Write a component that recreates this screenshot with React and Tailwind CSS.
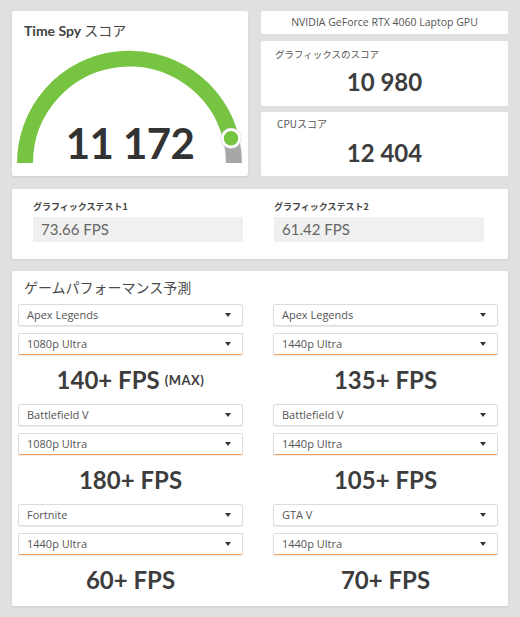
const latin = "font-['Lato','Noto_Sans_CJK_JP',sans-serif]";
const ui = "font-['Open_Sans','Noto_Sans_CJK_JP',sans-serif]";
const jp = "font-['Noto_Sans_CJK_JP',sans-serif]";

const games = [
  [
    { game: "Apex Legends", preset: "1080p Ultra", fps: "140+ FPS", max: true },
    { game: "Apex Legends", preset: "1440p Ultra", fps: "135+ FPS" },
  ],
  [
    { game: "Battlefield V", preset: "1080p Ultra", fps: "180+ FPS" },
    { game: "Battlefield V", preset: "1440p Ultra", fps: "105+ FPS" },
  ],
  [
    { game: "Fortnite", preset: "1440p Ultra", fps: "60+ FPS" },
    { game: "GTA V", preset: "1440p Ultra", fps: "70+ FPS" },
  ],
];

function Gauge() {
  // center (117.5, 152), radius 104.5, green stops ~13.7° above horizontal
  return (
    <svg className="absolute left-0 top-0" width="237" height="165" viewBox="0 0 237 165">
      <path d="M13 152 A104.5 104.5 0 0 1 219 127.3" fill="none" stroke="#76c442" strokeWidth="16" />
      <path d="M219 127.3 A104.5 104.5 0 0 1 222 152" fill="none" stroke="#a6a6a6" strokeWidth="16" />
      <circle cx="219" cy="127.3" r="10.5" fill="#dcdcdc" />
      <circle cx="219" cy="127.3" r="8.5" fill="#76c442" stroke="#fff" strokeWidth="2.5" />
    </svg>
  );
}

function Select({ label, active }) {
  return (
    <div
      className={`flex h-[22px] items-center justify-between rounded-[2px] border border-[#dcdcdc] bg-white pl-[8px] pr-[11px] shadow-[0_1px_1px_rgba(0,0,0,0.08)] ${
        active ? "border-b-[#f5a05a]" : ""
      }`}
    >
      <span className={`${ui} text-[11px] text-[#555]`}>{label}</span>
      <span className="h-0 w-0 border-x-[3.5px] border-t-[4px] border-x-transparent border-t-[#333]" />
    </div>
  );
}

function GameCol({ game, preset, fps, max }) {
  return (
    <div className="w-[225px]">
      <div className="flex flex-col gap-[7px]">
        <Select label={game} />
        <Select label={preset} active />
      </div>
      <div className="flex h-[49px] items-center justify-center">
        <span className={`${latin} text-[24px] font-bold text-[#3d3d3d]`}>{fps}</span>
        {max && (
          <span className={`${latin} ml-[5px] mt-[3px] text-[13px] font-bold tracking-[0.5px] text-[#3d3d3d]`}>
            (MAX)
          </span>
        )}
      </div>
    </div>
  );
}

export default function App() {
  return (
    <div className="h-[617px] w-[520px] overflow-hidden bg-[#e0e0e0] px-[12px] pt-[11px]">
      <div className="flex gap-[13px]">
        <div className="relative h-[165px] w-[237px] rounded-[2px] bg-white shadow-[0_1px_2px_rgba(0,0,0,0.08)]">
          <Gauge />
          <div className={`${latin} relative pl-[12px] pt-[9px] text-[14px] font-bold text-[#444]`}>
            Time Spy <span className={`${jp} font-normal`}>スコア</span>
          </div>
          <div
            className={`${latin} absolute left-0 right-0 top-[107px] text-center text-[42px] font-bold leading-[50px] tracking-[-0.6px] text-[#333]`}
          >
            11 172
          </div>
        </div>

        <div className="flex w-[248px] flex-col">
          <div
            className={`${ui} flex h-[23px] items-center justify-center rounded-[2px] bg-white text-[10.5px] text-[#555]`}
          >
            NVIDIA GeForce RTX 4060 Laptop GPU
          </div>
          <div className="mt-[7px] h-[65px] rounded-[2px] bg-white pl-[14px] pt-[5px]">
            <div className={`${jp} text-[9.5px] leading-[16px] text-[#555]`}>グラフィックスのスコア</div>
            <div className={`${latin} -ml-[14px] mt-[6px] text-center text-[24px] font-bold leading-[28px] text-[#3d3d3d]`}>
              10 980
            </div>
          </div>
          <div className="mt-[6px] h-[64px] rounded-[2px] bg-white pl-[16px] pt-[4px]">
            <div className={`${jp} text-[10px] leading-[16px] text-[#555]`}>CPUスコア</div>
            <div className={`${latin} -ml-[16px] mt-[7px] text-center text-[24px] font-bold leading-[28px] text-[#3d3d3d]`}>
              12 404
            </div>
          </div>
        </div>
      </div>

      <div className="mt-[13px] flex h-[70px] gap-[31px] rounded-[2px] bg-white pl-[21px] pt-[11px] shadow-[0_1px_2px_rgba(0,0,0,0.08)]">
        {[
          ["グラフィックステスト1", "73.66 FPS"],
          ["グラフィックステスト2", "61.42 FPS"],
        ].map(([label, value]) => (
          <div className="w-[210px]" key={label}>
            <div className={`${jp} text-[9px] font-bold leading-[14px] text-[#444]`}>{label}</div>
            <div className={`${latin} mt-[3px] flex h-[25px] items-center bg-[#f0f0f0] pl-[8px] text-[15px] text-[#666]`}>
              {value}
            </div>
          </div>
        ))}
      </div>

      <div className="mt-[12px] h-[335px] w-[496px] rounded-[2px] bg-white px-[6px] pt-[7px] shadow-[0_1px_2px_rgba(0,0,0,0.08)]">
        <div className={`${jp} pl-[6px] text-[14px] font-normal leading-[18px] text-[#4a4a4a]`}>ゲームパフォーマンス予測</div>
        <div className="mt-[8px] flex flex-col">
          {games.map((row, i) => (
            <div className="flex gap-[30px]" key={i}>
              {row.map((g) => (
                <GameCol key={g.game + g.preset} {...g} />
              ))}
            </div>
          ))}
        </div>
      </div>
    </div>
  );
}
